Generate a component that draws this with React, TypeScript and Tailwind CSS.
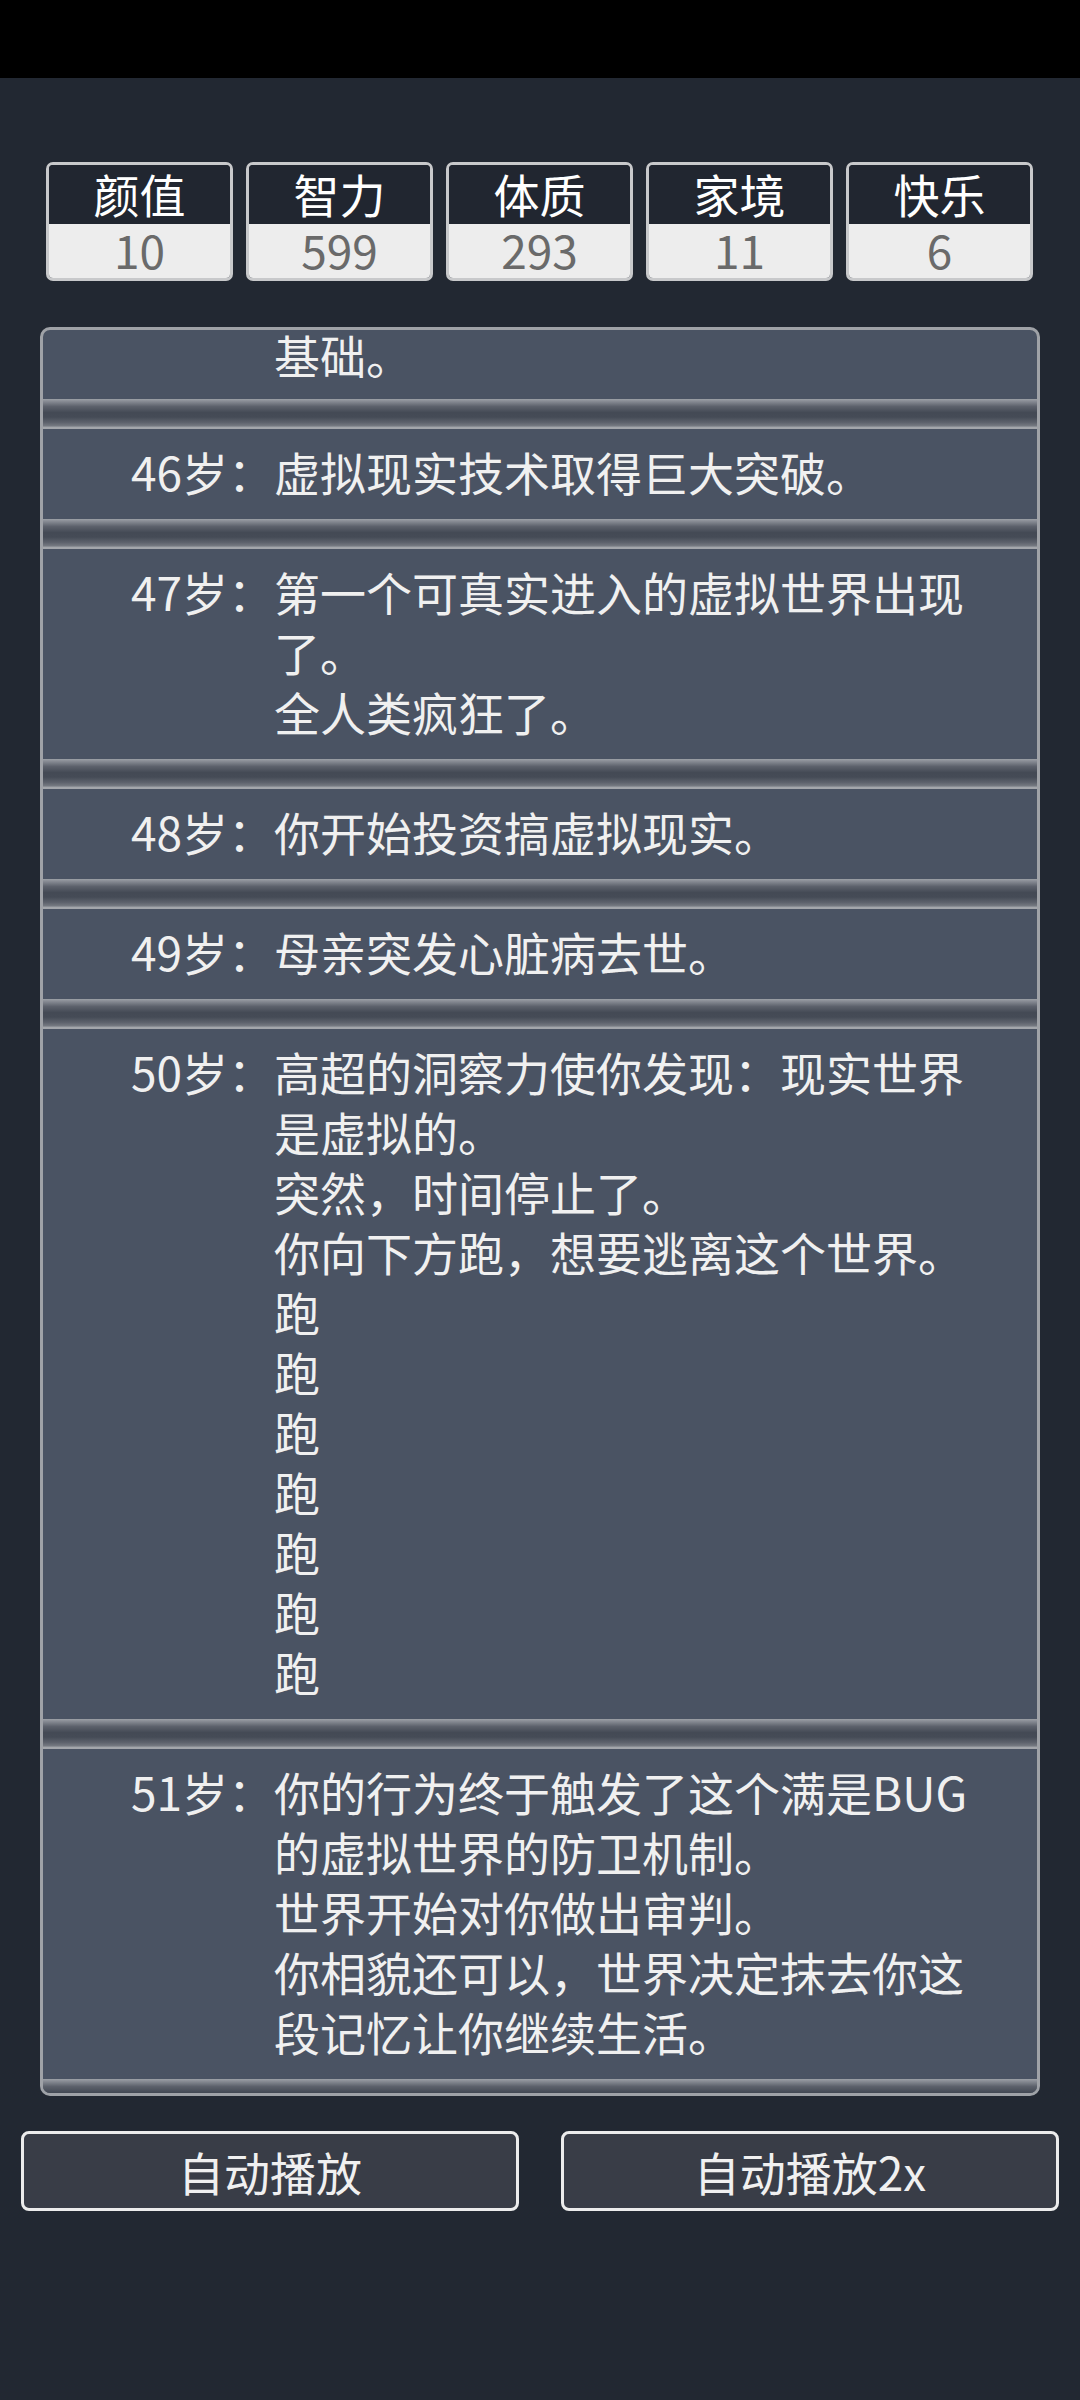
const stats = [
  { label: "颜值", value: "10" },
  { label: "智力", value: "599" },
  { label: "体质", value: "293" },
  { label: "家境", value: "11" },
  { label: "快乐", value: "6" },
];

const events = [
  { age: 46, lines: ["虚拟现实技术取得巨大突破。"] },
  { age: 47, lines: ["第一个可真实进入的虚拟世界出现了。", "全人类疯狂了。"] },
  { age: 48, lines: ["你开始投资搞虚拟现实。"] },
  { age: 49, lines: ["母亲突发心脏病去世。"] },
  {
    age: 50,
    lines: [
      "高超的洞察力使你发现：现实世界是虚拟的。",
      "突然，时间停止了。",
      "你向下方跑，想要逃离这个世界。",
      "跑",
      "跑",
      "跑",
      "跑",
      "跑",
      "跑",
      "跑",
    ],
  },
  {
    age: 51,
    lines: [
      "你的行为终于触发了这个满是BUG的虚拟世界的防卫机制。",
      "世界开始对你做出审判。",
      "你相貌还可以，世界决定抹去你这段记忆让你继续生活。",
    ],
  },
];

function Divider() {
  return (
    <div className="h-[30px] bg-[linear-gradient(to_bottom,#9ca0a6_0%,#878b93_8%,#5c616b_25%,#444a55_45%,#454b56_60%,#5d626c_78%,#767a82_90%,#a3a6ab_94%,#a3a6ab_100%)]" />
  );
}

function Row({ age, lines }: { age?: number; lines: string[] }) {
  return (
    <div className="grid grid-cols-[231px_1fr] pt-[12px] pb-[18px] pr-[58px] text-[46px] leading-[60px] text-[#f0f0f0]">
      <div className="text-right">{age !== undefined ? `${age}岁：` : ""}</div>
      <div>
        {lines.map((line, i) => (
          <p key={i}>{line}</p>
        ))}
      </div>
    </div>
  );
}

export default function App() {
  return (
    <div className="min-h-[2400px] w-[1080px] bg-[#222832] font-['Noto_Sans_CJK_SC','Noto_Sans',sans-serif]">
      <div className="h-[78px] bg-black" />

      <div className="flex gap-[13px] px-[46px] pt-[84px]">
        {stats.map((s) => (
          <div
            key={s.label}
            className="flex h-[119px] w-[187px] flex-col overflow-hidden rounded-[7px] border-[3px] border-[#c8c9cb]"
          >
            <div className="h-[59px] bg-[#212630] text-center text-[46px] leading-[57px] text-white">
              {s.label}
            </div>
            <div className="h-[54px] bg-[#ededed] text-center text-[46px] leading-[50px] text-[#6a6a6a]">
              {s.value}
            </div>
          </div>
        ))}
      </div>

      <div className="mx-[40px] mt-[46px] h-[1769px] overflow-hidden rounded-[10px] border-[3px] border-[#9fa2a7] bg-[#4a5363]">
        <div className="-mt-[6px]">
          <div className="grid grid-cols-[231px_1fr] pb-[15px] pr-[58px] text-[46px] leading-[60px] text-[#f0f0f0]">
            <div />
            <p>基础。</p>
          </div>
          {events.map((e) => (
            <div key={e.age}>
              <Divider />
              <Row age={e.age} lines={e.lines} />
            </div>
          ))}
          <Divider />
        </div>
      </div>

      <div className="flex gap-[42px] px-[21px] pt-[35px]">
        {["自动播放", "自动播放2x"].map((t) => (
          <button
            key={t}
            className="h-[80px] flex-1 rounded-[8px] border-[3px] border-[#ececec] bg-[#393d47] text-center text-[46px] leading-[72px] text-[#f0f0f0]"
          >
            {t}
          </button>
        ))}
      </div>
    </div>
  );
}
